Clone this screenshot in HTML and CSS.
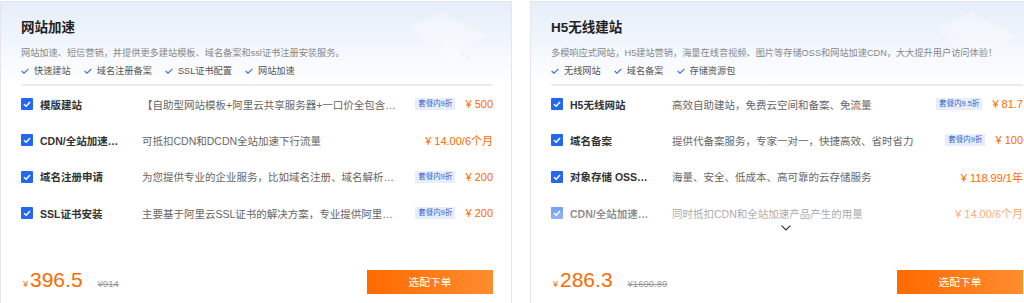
FILE: index.html
```html
<!DOCTYPE html>
<html lang="zh-CN">
<head>
  <meta charset="UTF-8">
  <title>建站套餐</title>
  <link rel="stylesheet" href="styles.css">
</head>
<body>
  <div class="page">
    <!-- 网站加速 -->
    <div class="card">
      <div class="card-head">
        <svg class="head-deco" width="90" height="60" viewBox="0 0 90 60" aria-hidden="true">
          <path d="M10 20 L40 6 L86 30 L56 46 Z" fill="#ffffff" opacity="0.3"/>
          <path d="M10 20 L10 28 L56 54 L56 46 Z" fill="#ffffff" opacity="0.2"/>
          <circle cx="62" cy="49" r="1" fill="#e1e8f3"/>
          <circle cx="66" cy="51" r="1" fill="#e1e8f3"/>
        </svg>
        <div class="head-body">
          <h2 class="card-title">网站加速</h2>
          <p class="card-desc">网站加速、短信营销，并提供更多建站模板、域名备案和ssl证书注册安装服务。</p>
          <ul class="features">
            <li><svg class="tick" viewBox="0 0 8 6"><path d="M0.6 3 L3 5.2 L7.4 0.8"/></svg>快速建站</li>
            <li><svg class="tick" viewBox="0 0 8 6"><path d="M0.6 3 L3 5.2 L7.4 0.8"/></svg>域名注册备案</li>
            <li><svg class="tick" viewBox="0 0 8 6"><path d="M0.6 3 L3 5.2 L7.4 0.8"/></svg>SSL证书配置</li>
            <li><svg class="tick" viewBox="0 0 8 6"><path d="M0.6 3 L3 5.2 L7.4 0.8"/></svg>网站加速</li>
          </ul>
        </div>
      </div>

      <ul class="items">
        <li class="item">
          <span class="checkbox"><svg viewBox="0 0 12 12"><path d="M3 6.2 L5.2 8.2 L9 4"/></svg></span>
          <span class="item-name">模版建站</span>
          <span class="item-desc">【自助型网站模板+阿里云共享服务器+一口价全包含服务】</span>
          <span class="badge">套餐内9折</span>
          <span class="item-price">¥ 500</span>
        </li>
        <li class="item">
          <span class="checkbox"><svg viewBox="0 0 12 12"><path d="M3 6.2 L5.2 8.2 L9 4"/></svg></span>
          <span class="item-name">CDN/全站加速资源包</span>
          <span class="item-desc">可抵扣CDN和DCDN全站加速下行流量</span>
          <span class="item-price">¥ 14.00/6个月</span>
        </li>
        <li class="item">
          <span class="checkbox"><svg viewBox="0 0 12 12"><path d="M3 6.2 L5.2 8.2 L9 4"/></svg></span>
          <span class="item-name">域名注册申请</span>
          <span class="item-desc">为您提供专业的企业服务，比如域名注册、域名解析等服务</span>
          <span class="badge">套餐内9折</span>
          <span class="item-price">¥ 200</span>
        </li>
        <li class="item">
          <span class="checkbox"><svg viewBox="0 0 12 12"><path d="M3 6.2 L5.2 8.2 L9 4"/></svg></span>
          <span class="item-name">SSL证书安装</span>
          <span class="item-desc">主要基于阿里云SSL证书的解决方案，专业提供阿里云证书服务</span>
          <span class="badge">套餐内9折</span>
          <span class="item-price">¥ 200</span>
        </li>
      </ul>

      <div class="card-foot">
        <div class="total">
          <span class="yen">¥</span><span class="amount">396.5</span>
          <s class="origin">¥914</s>
        </div>
        <button class="buy">选配下单</button>
      </div>
    </div>

    <!-- H5无线建站 -->
    <div class="card">
      <div class="card-head">
        <svg class="head-deco" width="90" height="60" viewBox="0 0 90 60" aria-hidden="true">
          <path d="M10 20 L40 6 L86 30 L56 46 Z" fill="#ffffff" opacity="0.3"/>
          <path d="M10 20 L10 28 L56 54 L56 46 Z" fill="#ffffff" opacity="0.2"/>
        </svg>
        <div class="head-body">
          <h2 class="card-title">H5无线建站</h2>
          <p class="card-desc">多模响应式网站，H5建站营销，海量在线音视频、图片等存储OSS和网站加速CDN，大大提升用户访问体验！</p>
          <ul class="features">
            <li><svg class="tick" viewBox="0 0 8 6"><path d="M0.6 3 L3 5.2 L7.4 0.8"/></svg>无线网站</li>
            <li><svg class="tick" viewBox="0 0 8 6"><path d="M0.6 3 L3 5.2 L7.4 0.8"/></svg>域名备案</li>
            <li><svg class="tick" viewBox="0 0 8 6"><path d="M0.6 3 L3 5.2 L7.4 0.8"/></svg>存储资源包</li>
          </ul>
        </div>
      </div>

      <ul class="items folded">
        <li class="item">
          <span class="checkbox"><svg viewBox="0 0 12 12"><path d="M3 6.2 L5.2 8.2 L9 4"/></svg></span>
          <span class="item-name">H5无线网站</span>
          <span class="item-desc">高效自助建站，免费云空间和备案、免流量</span>
          <span class="badge">套餐内9.5折</span>
          <span class="item-price">¥ 81.7</span>
        </li>
        <li class="item">
          <span class="checkbox"><svg viewBox="0 0 12 12"><path d="M3 6.2 L5.2 8.2 L9 4"/></svg></span>
          <span class="item-name">域名备案</span>
          <span class="item-desc">提供代备案服务，专家一对一，快捷高效、省时省力</span>
          <span class="badge">套餐内9折</span>
          <span class="item-price">¥ 100</span>
        </li>
        <li class="item">
          <span class="checkbox"><svg viewBox="0 0 12 12"><path d="M3 6.2 L5.2 8.2 L9 4"/></svg></span>
          <span class="item-name">对象存储 OSS 资源包</span>
          <span class="item-desc">海量、安全、低成本、高可靠的云存储服务</span>
          <span class="item-price">¥ 118.99/1年</span>
        </li>
        <li class="item">
          <span class="checkbox"><svg viewBox="0 0 12 12"><path d="M3 6.2 L5.2 8.2 L9 4"/></svg></span>
          <span class="item-name">CDN/全站加速资源包</span>
          <span class="item-desc">同时抵扣CDN和全站加速产品产生的用量</span>
          <span class="item-price">¥ 14.00/6个月</span>
        </li>
        <li class="fade" aria-hidden="true"></li>
        <li class="more">
          <svg viewBox="0 0 10 6" width="10" height="6"><path d="M0.6 0.6 L5 5 L9.4 0.6"/></svg>
        </li>
      </ul>

      <div class="card-foot">
        <div class="total">
          <span class="yen">¥</span><span class="amount">286.3</span>
          <s class="origin">¥1690.89</s>
        </div>
        <button class="buy">选配下单</button>
      </div>
    </div>
  </div>
</body>
</html>
```

FILE: styles.css
```css
* {
  margin: 0;
  padding: 0;
  box-sizing: border-box;
}

html, body {
  height: 100%;
  overflow: hidden;
  background: #fff;
  font-family: "Liberation Sans", "Noto Sans CJK SC", sans-serif;
  color: #333;
}

ul {
  list-style: none;
}

/* === PAGE === */
.page {
  display: flex;
  gap: 18px;
  padding-top: 1px;
}

.card {
  flex-shrink: 0;
  width: 512px;
  min-height: 330px;
  border: 1px solid #e6e6e6;
  background: #fff;
}

/* === HEAD === */
.card-head {
  position: relative;
  padding: 15.5px 18px 0 20px;
  background: linear-gradient(180deg, #e6eefb 0%, #f0f5fc 45%, #fcfdff 85%, #fff 100%);
}

.head-deco {
  position: absolute;
  top: 4px;
  left: 400px;
}

.head-body {
  position: relative;
  border-bottom: 2px solid #ededed;
  padding-bottom: 6px;
}

.card-title {
  font-size: 13.5px;
  line-height: 20px;
  font-weight: 700;
  color: #222;
}

.card-desc {
  margin-top: 8.5px;
  font-size: 9.2px;
  line-height: 14px;
  color: #888;
  white-space: nowrap;
}

.features {
  display: flex;
  gap: 13px;
  margin-top: 4px;
  font-size: 9.2px;
  line-height: 14px;
  color: #555;
}

.features li {
  display: flex;
  align-items: center;
  gap: 5px;
}

.tick {
  width: 8px;
  height: 6px;
  fill: none;
  stroke: #3b73e6;
  stroke-width: 1.2;
}

/* === ITEMS === */
.items {
  position: relative;
  padding: 0 18px 0 20px;
}

.item {
  display: flex;
  align-items: center;
  height: 36.3px;
  font-size: 10.5px;
  white-space: nowrap;
}

.checkbox {
  flex-shrink: 0;
  width: 12px;
  height: 12px;
  border-radius: 1px;
  background: #2468f2;
}

.checkbox svg {
  display: block;
  width: 12px;
  height: 12px;
  fill: none;
  stroke: #fff;
  stroke-width: 1.5;
}

.item-name {
  flex-shrink: 0;
  width: 80px;
  margin: 0 22px 0 7px;
  font-weight: 700;
  color: #333;
  overflow: hidden;
  text-overflow: ellipsis;
}

.item-desc {
  flex: 1;
  min-width: 0;
  margin-right: 16px;
  color: #666;
  overflow: hidden;
  text-overflow: ellipsis;
}

.badge {
  flex-shrink: 0;
  height: 12px;
  line-height: 12px;
  padding: 0 3px;
  margin-right: 10px;
  font-size: 7.5px;
  color: #3262c8;
  background: #e6eefc;
}

.item-price {
  flex-shrink: 0;
  font-size: 11px;
  color: #ff6a00;
}

.folded .fade {
  position: absolute;
  left: 0;
  right: 0;
  bottom: 0;
  height: 38px;
  background: linear-gradient(180deg, rgba(255, 255, 255, 0.2), rgba(255, 255, 255, 0.65));
}

.folded .more {
  position: absolute;
  left: 0;
  right: 0;
  bottom: 0;
  display: flex;
  justify-content: center;
}

.more svg {
  fill: none;
  stroke: #333;
  stroke-width: 1.2;
}

/* === FOOT === */
.card-foot {
  display: flex;
  align-items: center;
  justify-content: space-between;
  margin-top: 37.8px;
  padding: 0 18px 0 20px;
}

.total {
  display: flex;
  align-items: baseline;
  line-height: 22px;
  color: #ff6a00;
}

.yen {
  font-size: 9px;
  margin: 0 2px 0 2px;
}

.amount {
  font-size: 21px;
}

.origin {
  margin-left: 15px;
  font-size: 9.5px;
  color: #999;
}

.buy {
  width: 126px;
  height: 24px;
  border: none;
  font-family: inherit;
  font-size: 10.7px;
  color: #fff;
  background: linear-gradient(90deg, #ff6a00, #ff8c2e);
  cursor: pointer;
}
```
